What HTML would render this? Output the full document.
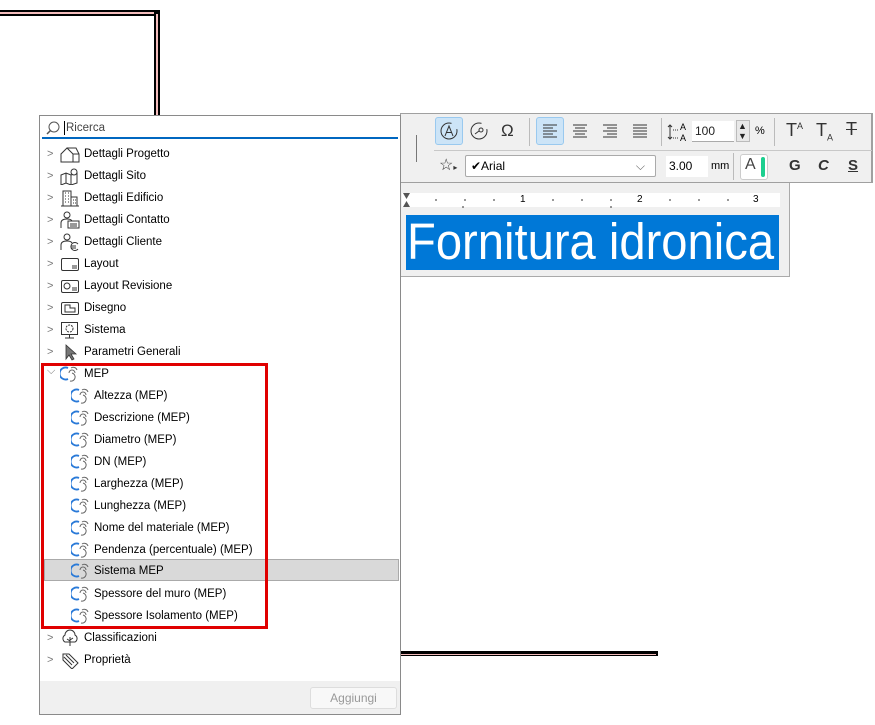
<!DOCTYPE html>
<html><head><meta charset="utf-8"><style>
*{margin:0;padding:0;box-sizing:border-box}
body{width:875px;height:725px;background:#fff;position:relative;overflow:hidden;font-family:"Liberation Sans",Arial,sans-serif;font-size:12px;color:#000}
.a{position:absolute}
.row{position:absolute;left:40px;width:360px;height:22px;line-height:22px;font-size:11.5px;margin-top:1px}
.row .chev{position:absolute;left:7px;top:0;color:#777;font-size:11px}
.row svg{position:absolute;left:20px;top:2px}
.row .t{position:absolute;left:44px}
.sub svg{left:31px}
.sub .t{left:54px}
.btn{position:absolute;width:28px;height:28px;border-radius:3px}
.sel{background:#cce4f7;border:1px solid #99c9ef}
</style></head><body>

<div class="a" style="left:0;top:10px;width:160px;height:6px;background:#000"></div>
<div class="a" style="left:0;top:12px;width:156px;height:2px;background:#f4bcbc"></div>
<div class="a" style="left:154px;top:10px;width:6px;height:108px;background:#000;border-top-right-radius:3px"></div>
<div class="a" style="left:156px;top:14px;width:2px;height:104px;background:#f4bcbc"></div>
<div class="a" style="left:400px;top:651px;width:258px;height:5px;background:#000"></div>
<div class="a" style="left:400px;top:654px;width:256px;height:1px;background:#f4bcbc"></div>

<div class="a" style="left:400px;top:113px;width:473px;height:70px;background:#f0f0f0;border:1px solid #a0a0a0;border-right:2px solid #a0a0a0"></div>
<div class="a" style="left:416px;top:135px;width:1px;height:27px;background:#777"></div>
<div class="a" style="left:434px;top:150px;width:438px;height:1px;background:#c8c8c8"></div>
<div class="btn sel" style="left:435px;top:117px"></div>
<svg class="a" style="left:439px;top:120px" width="22" height="22"><circle cx="10" cy="11" r="8" fill="none" stroke="#333" stroke-dasharray="40 8"/><path d="M6 16l4-10 4 10M7.5 12.5h5" stroke="#333" fill="none"/></svg>
<svg class="a" style="left:469px;top:120px" width="22" height="22"><circle cx="10" cy="11" r="8" fill="none" stroke="#333" stroke-dasharray="40 8"/><circle cx="12" cy="10" r="2" fill="none" stroke="#333"/><path d="M6 14l4-3" stroke="#333"/></svg>
<div class="a" style="left:501px;top:121px;font-size:17px;color:#333">Ω</div>
<div class="a" style="left:529px;top:118px;width:1px;height:28px;background:#bbb"></div>
<div class="btn sel" style="left:536px;top:117px"></div>
<svg class="a" style="left:543px;top:124px" width="16" height="14"><path d="M0 1h14M0 4h10M0 7h14M0 10h10M0 13h14" stroke="#333"/></svg>
<svg class="a" style="left:573px;top:124px" width="16" height="14"><path d="M0 1h14M2 4h10M0 7h14M2 10h10M0 13h14" stroke="#333"/></svg>
<svg class="a" style="left:603px;top:124px" width="16" height="14"><path d="M0 1h14M4 4h10M0 7h14M4 10h10M0 13h14" stroke="#333"/></svg>
<svg class="a" style="left:633px;top:124px" width="16" height="14"><path d="M0 1h14M0 4h14M0 7h14M0 10h14M0 13h14" stroke="#333"/></svg>
<div class="a" style="left:661px;top:118px;width:1px;height:28px;background:#bbb"></div>
<svg class="a" style="left:667px;top:121px" width="22" height="22"><path d="M3 4v14M1 6l2-2 2 2M1 16l2 2 2-2" stroke="#333" fill="none"/><path d="M6 9h6M6 17h6" stroke="#333" stroke-dasharray="1 1"/><text x="13" y="9" font-size="9" font-family="Liberation Sans">A</text><text x="13" y="20" font-size="9" font-family="Liberation Sans">A</text></svg>
<div class="a" style="left:692px;top:121px;width:42px;height:21px;background:#fff;border-bottom:1px solid #aaa;font-size:12px;line-height:21px;padding-left:3px;color:#222">100</div>
<div class="a" style="left:736px;top:120px;width:14px;height:22px;background:#e8e8e8;border:1px solid #bbb"></div>
<div class="a" style="left:738px;top:121px;font-size:9px;line-height:10px;color:#222">▲<br>▼</div>
<div class="a" style="left:755px;top:125px;font-size:11px">%</div>
<div class="a" style="left:774px;top:118px;width:1px;height:28px;background:#bbb"></div>
<div class="a" style="left:786px;top:120px;font-size:18px;color:#333">T<sup style="font-size:9px">A</sup></div>
<div class="a" style="left:816px;top:120px;font-size:18px;color:#333">T<sub style="font-size:9px">A</sub></div>
<div class="a" style="left:846px;top:119px;font-size:18px;color:#333;text-decoration:line-through">T</div>
<div class="a" style="left:439px;top:155px;font-size:16px;color:#333">☆<span style="font-size:8px">▸</span></div>
<div class="a" style="left:465px;top:155px;width:191px;height:22px;background:#fff;border:1px solid #aaa;border-radius:2px;font-size:12px;line-height:20px;padding-left:5px">✔Arial<span style="position:absolute;right:10px;color:#666">⌵</span></div>
<div class="a" style="left:666px;top:156px;width:42px;height:21px;background:#fff;font-size:12px;line-height:21px;padding-left:3px">3.00</div>
<div class="a" style="left:711px;top:160px;font-size:11px">mm</div>
<div class="a" style="left:733px;top:153px;width:1px;height:27px;background:#bbb"></div>
<div class="a" style="left:740px;top:154px;width:28px;height:26px;background:#fff;border:1px solid #ccc;border-radius:3px"></div>
<div class="a" style="left:745px;top:156px;font-size:16px;color:#444">A</div>
<div class="a" style="left:761px;top:157px;width:4px;height:20px;background:#1ccf8f;border-radius:2px"></div>
<div class="a" style="left:789px;top:157px;font-size:15px;font-weight:bold;color:#333">G</div>
<div class="a" style="left:818px;top:157px;font-size:15px;font-weight:bold;font-style:italic;color:#333">C</div>
<div class="a" style="left:848px;top:157px;font-size:15px;font-weight:bold;color:#333;text-decoration:underline">S</div>

<div class="a" style="left:400px;top:183px;width:390px;height:94px;background:#f0f0f0;border:1px solid #aaa;border-top:none"></div>
<div class="a" style="left:402px;top:193px;width:378px;height:14px;background:#fff"></div>
<svg class="a" style="left:402px;top:192px" width="10" height="16"><path d="M1 1h7L4.5 7z M1 15h7L4.5 9z" fill="#555"/></svg>
<svg class="a" style="left:402px;top:193px" width="378" height="16"><g stroke="#333"><path d="M34 6v2M63 6v2M92 6v2M151 6v2M180 6v2M209 6v2M268 6v2M297 6v2M326 6v2M61 13v2M209 13v2"/></g></svg>
<div class="a" style="left:520px;top:194px;font-size:10px">1</div>
<div class="a" style="left:637px;top:194px;font-size:10px">2</div>
<div class="a" style="left:753px;top:194px;font-size:10px">3</div>
<div class="a" style="left:406px;top:215px;width:373px;height:55px;background:#0078d7"></div>
<div class="a" style="left:407px;top:214px;font-size:51px;line-height:56px;color:#fff;transform:scaleX(0.925);transform-origin:0 0;white-space:nowrap">Fornitura idronica</div>

<div class="a" style="left:39px;top:115px;width:362px;height:600px;background:#fff;border:1px solid #8a8a8a"></div>
<div class="a" style="left:42px;top:117px;width:356px;height:22px;border-bottom:2px solid #0067c0"></div>
<svg class="a" style="left:46px;top:121px" width="16" height="16"><circle cx="8" cy="6" r="5" fill="none" stroke="#555"/><path d="M4.5 9.5L1 13" stroke="#555" stroke-width="1.5"/></svg>
<div class="a" style="left:64px;top:121px;width:1px;height:14px;background:#000"></div>
<div class="a" style="left:66px;top:122px;font-size:11.5px;color:#444">Ricerca</div>

<div class="row" style="top:142px"><span class="chev">&gt;</span><svg width="20" height="18"><path d="M1 17V9l6-6h9l3 6v8zM1 9l6-6 6 6v8M13 9h6" fill="none" stroke="#333"/></svg><span class="t">Dettagli Progetto</span></div>
<div class="row" style="top:164px"><span class="chev">&gt;</span><svg width="20" height="18"><path d="M1 8l5-2 5 2 6-2v10l-6 2-5-2-5 2zM6 6v10M11 8v10" fill="none" stroke="#333"/><circle cx="14" cy="5" r="3" fill="#fff" stroke="#333"/></svg><span class="t">Dettagli Sito</span></div>
<div class="row" style="top:186px"><span class="chev">&gt;</span><svg width="20" height="18"><path d="M3 17V2h8v15zM11 17V8h6v9zM1 17h18" fill="none" stroke="#333"/><path d="M5 4h1M8 4h1M5 7h1M8 7h1M5 10h1M8 10h1M5 13h1M8 13h1M13 11h1M15 11h1M13 14h1M15 14h1" stroke="#333"/></svg><span class="t">Dettagli Edificio</span></div>
<div class="row" style="top:208px"><span class="chev">&gt;</span><svg width="20" height="18"><circle cx="7" cy="4" r="3" fill="none" stroke="#333"/><path d="M1 17v-5q0-4 6-4 4 0 5 2M8 10h11v7H8zM10 13h7M10 15h7" fill="none" stroke="#333"/></svg><span class="t">Dettagli Contatto</span></div>
<div class="row" style="top:230px"><span class="chev">&gt;</span><svg width="20" height="18"><circle cx="7" cy="4" r="3" fill="none" stroke="#333"/><path d="M1 17v-5q0-4 6-4 4 0 5 2M18 11a4 4 0 1 0 0 5M11 13h5M11 15h5" fill="none" stroke="#333"/></svg><span class="t">Dettagli Cliente</span></div>
<div class="row" style="top:252px"><span class="chev">&gt;</span><svg width="20" height="18"><rect x="1.5" y="3.5" width="17" height="12" rx="1.5" fill="none" stroke="#333"/><path d="M12 13h5M12 11h5" stroke="#333"/></svg><span class="t">Layout</span></div>
<div class="row" style="top:274px"><span class="chev">&gt;</span><svg width="20" height="18"><rect x="1.5" y="3.5" width="17" height="12" rx="1.5" fill="none" stroke="#333"/><circle cx="7" cy="9" r="3" fill="none" stroke="#333"/><path d="M12 13h5M12 11h5" stroke="#333"/></svg><span class="t">Layout Revisione</span></div>
<div class="row" style="top:296px"><span class="chev">&gt;</span><svg width="20" height="18"><rect x="1.5" y="3.5" width="17" height="12" rx="1.5" fill="none" stroke="#333"/><path d="M5 6v7h10V9h-5V6z" fill="none" stroke="#333"/></svg><span class="t">Disegno</span></div>
<div class="row" style="top:318px"><span class="chev">&gt;</span><svg width="20" height="18"><rect x="1.5" y="1.5" width="16" height="12" fill="none" stroke="#333"/><circle cx="9.5" cy="7.5" r="3.5" fill="none" stroke="#333" stroke-dasharray="2 1"/><path d="M9.5 13.5v3M5 17h9" stroke="#333"/></svg><span class="t">Sistema</span></div>
<div class="row" style="top:340px"><span class="chev">&gt;</span><svg width="20" height="18"><path d="M6 2v14l3-4 3 5 2-1-3-5h5z" fill="#777" stroke="#333" stroke-width=".8"/></svg><span class="t">Parametri Generali</span></div>
<div class="row" style="top:362px"><span class="chev" style="top:-3px">⌵</span><svg width="20" height="18"><use href="#m"/></svg><span class="t">MEP</span></div>

<div class="a" style="left:44px;top:559px;width:355px;height:22px;background:#d9d9d9;border:1px solid #aaa"></div>
<div class="row sub" style="top:384px"><svg width="20" height="18"><use href="#m"/></svg><span class="t">Altezza (MEP)</span></div>
<div class="row sub" style="top:406px"><svg width="20" height="18"><use href="#m"/></svg><span class="t">Descrizione (MEP)</span></div>
<div class="row sub" style="top:428px"><svg width="20" height="18"><use href="#m"/></svg><span class="t">Diametro (MEP)</span></div>
<div class="row sub" style="top:450px"><svg width="20" height="18"><use href="#m"/></svg><span class="t">DN (MEP)</span></div>
<div class="row sub" style="top:472px"><svg width="20" height="18"><use href="#m"/></svg><span class="t">Larghezza (MEP)</span></div>
<div class="row sub" style="top:494px"><svg width="20" height="18"><use href="#m"/></svg><span class="t">Lunghezza (MEP)</span></div>
<div class="row sub" style="top:516px"><svg width="20" height="18"><use href="#m"/></svg><span class="t">Nome del materiale (MEP)</span></div>
<div class="row sub" style="top:538px"><svg width="20" height="18"><use href="#m"/></svg><span class="t">Pendenza (percentuale) (MEP)</span></div>
<div class="row sub" style="top:559px"><svg width="20" height="18"><use href="#m"/></svg><span class="t">Sistema MEP</span></div>
<div class="row sub" style="top:582px"><svg width="20" height="18"><use href="#m"/></svg><span class="t">Spessore del muro (MEP)</span></div>
<div class="row sub" style="top:604px"><svg width="20" height="18"><use href="#m"/></svg><span class="t">Spessore Isolamento (MEP)</span></div>
<div class="row" style="top:626px"><span class="chev">&gt;</span><svg width="20" height="18"><path d="M10 17V8M10 12l-3-2M10 11l3-2M5 13a4 4 0 0 1 0-7 5 5 0 0 1 10 0 4 4 0 0 1 0 7z" fill="none" stroke="#333"/></svg><span class="t">Classificazioni</span></div>
<div class="row" style="top:648px"><span class="chev">&gt;</span><svg width="20" height="18"><path d="M3 3h6l9 9-6 6-9-9zM4 6l8 8M6 4l8 8" fill="none" stroke="#333"/></svg><span class="t">Proprietà</span></div>

<svg width="0" height="0" style="position:absolute"><defs><g id="m"><path d="M8 3a6 6 0 1 0 0 11" fill="none" stroke="#2a7ad8" stroke-width="1.8"/><path d="M9 8a3 3 0 1 1 6 0M12 8a4 4 0 1 1-2 8M11 3a4 4 0 0 1 6 2" fill="none" stroke="#666"/></g></defs></svg>

<div class="a" style="left:41px;top:363px;width:227px;height:266px;border:3px solid #e00000"></div>

<div class="a" style="left:40px;top:681px;width:360px;height:33px;background:#f0f0f0"></div>
<div class="a" style="left:310px;top:687px;width:87px;height:22px;background:#f8f8f8;border:1px solid #ddd;border-radius:3px;text-align:center;line-height:20px;color:#999;font-size:12px">Aggiungi</div>
</body></html>
